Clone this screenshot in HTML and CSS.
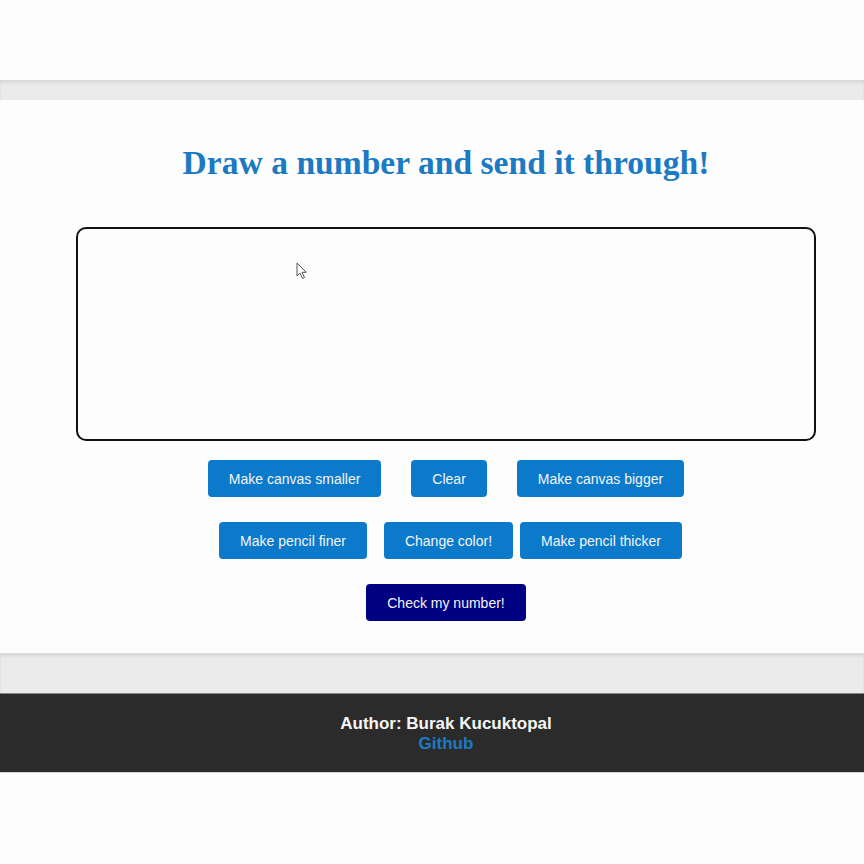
FILE: index.html
```html
<!DOCTYPE html>
<html lang="en">
<head>
<meta charset="utf-8">
<title>Draw a number</title>
<link rel="stylesheet" href="styles.css">
</head>
<body>
<div class="top-space"></div>
<div class="band band-top"></div>
<main class="main">
  <h1 class="title">Draw a number and send it through!</h1>
  <div class="canvas-wrap">
    <div class="canvas">
      <svg class="cursor" width="12" height="18" viewBox="0 0 12 18"><path d="M1 1 L1 14 L4 11 L6.5 16.5 L8.5 15.5 L6 10.3 L10.3 10.3 Z" fill="#fff" stroke="#555" stroke-width="1" stroke-linejoin="round"/></svg>
    </div>
  </div>
  <div class="row row-1">
    <button class="btn">Make canvas smaller</button>
    <button class="btn">Clear</button>
    <button class="btn">Make canvas bigger</button>
  </div>
  <div class="row row-2">
    <button class="btn">Make pencil finer</button>
    <button class="btn btn-mid">Change color!</button>
    <button class="btn">Make pencil thicker</button>
  </div>
  <div class="row row-3">
    <button class="btn btn-check">Check my number!</button>
  </div>
</main>
<div class="band band-bottom"></div>
<footer class="footer">
  <div class="footer-inner">
    <div class="author">Author: Burak Kucuktopal</div>
    <a class="github" href="#">Github</a>
  </div>
</footer>
</body>
</html>
```

FILE: styles.css
```css
html, body {
  margin: 0;
  padding: 0;
  background: #fdfdfd;
}
body {
  font-family: "Liberation Sans", Arial, sans-serif;
}
.top-space {
  height: 80px;
}
.band {
  background: #ebebeb;
  box-shadow: inset 0 2px 3px rgba(0, 0, 0, 0.08);
}
.band-top {
  height: 20px;
  border-top: 1px solid #dadada;
  box-sizing: border-box;
}
.band-bottom {
  height: 40px;
  border-top: 1px solid #dadada;
  box-sizing: border-box;
}
.main {
  height: 553px;
  box-sizing: border-box;
  padding-left: 28px;
  padding-top: 44px;
  background: #fdfdfd;
}
.title {
  margin: 0;
  text-align: center;
  font-family: "Liberation Serif", "Times New Roman", serif;
  font-weight: bold;
  font-size: 33.6px;
  line-height: 38px;
  color: #1b7ac3;
}
.canvas-wrap {
  display: flex;
  justify-content: center;
  margin-top: 45px;
}
.canvas {
  position: relative;
  width: 740px;
  height: 214px;
  box-sizing: border-box;
  border: 2px solid #111;
  border-radius: 10px;
  background: #fdfdfd;
}
.cursor {
  position: absolute;
  left: 218px;
  top: 33px;
}
.row {
  display: flex;
  justify-content: center;
}
.row-1 {
  margin-top: 19px;
  gap: 30px;
}
.row-2 {
  margin-top: 25px;
  padding-left: 9px;
}
.btn-mid {
  margin: 0 7px 0 17px;
}
.row-3 {
  margin-top: 25px;
}
.btn {
  height: 37px;
  padding: 0 21px;
  border: none;
  border-radius: 4px;
  background: #0b7acb;
  color: #f4f4f4;
  font-family: "Liberation Sans", Arial, sans-serif;
  font-size: 14px;
  cursor: pointer;
}
.btn-check {
  background: #000083;
}
.footer {
  height: 80px;
  background: #2b2b2b;
  border-top: 1px solid #888;
  border-bottom: 1px solid #cfcfcf;
  box-sizing: border-box;
  display: flex;
  align-items: center;
  justify-content: center;
  padding-left: 28px;
}
.footer-inner {
  text-align: center;
  font-weight: bold;
  font-size: 17px;
  line-height: 20px;
  padding-top: 2px;
}
.author {
  color: #f5f5f5;
}
.github {
  color: #1b7ac3;
  text-decoration: none;
}
```
